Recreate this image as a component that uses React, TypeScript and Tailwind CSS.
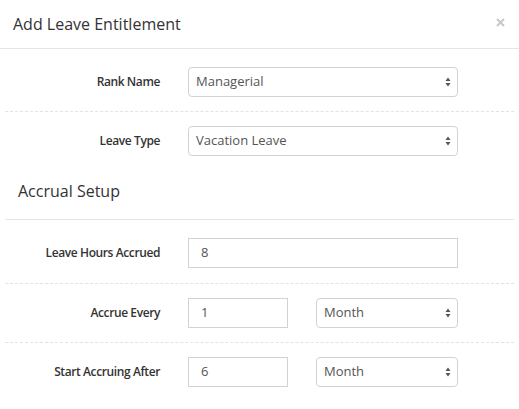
import React from 'react';

const font = { fontFamily: '"Open Sans", "Liberation Sans", sans-serif' };

function Arrows() {
  return (
    <svg width="6" height="10" viewBox="0 0 6 10" className="shrink-0">
      <path d="M3 0.5 L5.5 4 L0.5 4 Z" fill="#555" />
      <path d="M3 9.5 L5.5 6 L0.5 6 Z" fill="#555" />
    </svg>
  );
}

function Select({ value, width }: { value: string; width: string }) {
  return (
    <div className={`${width} h-[30px] border border-[#d2d2d2] rounded-[4px] bg-white flex items-center justify-between pl-[7px] pr-[6px] text-[13px] text-[#555]`}>
      <span>{value}</span>
      <Arrows />
    </div>
  );
}

function TextInput({ value, width }: { value: string; width: string }) {
  return (
    <div className={`${width} h-[30px] border border-[#d2d2d2] bg-white flex items-center pl-[12px] text-[13px] text-[#555]`}>
      {value}
    </div>
  );
}

function Row({ label, children, last, pb = 'pb-[14px]' }: { label: string; children: React.ReactNode; last?: boolean; pb?: string }) {
  return (
    <div className={`flex items-center pt-[14px] ${pb} ${last ? '' : 'border-b border-dashed border-[#e3e3e3]'}`}>
      <div className="w-[155px] text-right text-[12px] font-semibold tracking-[-0.4px] text-[#333]">{label}</div>
      <div className="ml-[28px] flex items-center gap-[28px]">{children}</div>
    </div>
  );
}

export default function App() {
  return (
    <div className="w-[519px] h-[409px] bg-white overflow-hidden" style={font}>
      <div className="flex items-center justify-between pl-[13px] pr-[14px] pt-[13px] pb-[13px] border-b border-[#e5e5e5]">
        <h4 className="text-[16px] leading-[22px] text-[#333]">Add Leave Entitlement</h4>
        <svg width="9" height="9" viewBox="0 0 9 9" className="mb-[4px]">
          <path d="M1 1 L8 8 M8 1 L1 8" stroke="#c8c8c8" strokeWidth="2" />
        </svg>
      </div>
      <div className="px-[5px] pt-[4px]">
        <Row label="Rank Name">
          <Select value="Managerial" width="w-[270px]" />
        </Row>
        <Row label="Leave Type" last>
          <Select value="Vacation Leave" width="w-[270px]" />
        </Row>
        <div className="pt-[10px] pb-[17px] pl-[13px] text-[16px] leading-[22px] text-[#333] border-b border-[#e5e5e5]">
          Accrual Setup
        </div>
        <div className="pt-[4px]">
          <Row label="Leave Hours Accrued" pb="pb-[15px]">
            <TextInput value="8" width="w-[270px]" />
          </Row>
          <Row label="Accrue Every">
            <TextInput value="1" width="w-[100px]" />
            <Select value="Month" width="w-[142px]" />
          </Row>
          <Row label="Start Accruing After" last>
            <TextInput value="6" width="w-[100px]" />
            <Select value="Month" width="w-[142px]" />
          </Row>
        </div>
      </div>
    </div>
  );
}
